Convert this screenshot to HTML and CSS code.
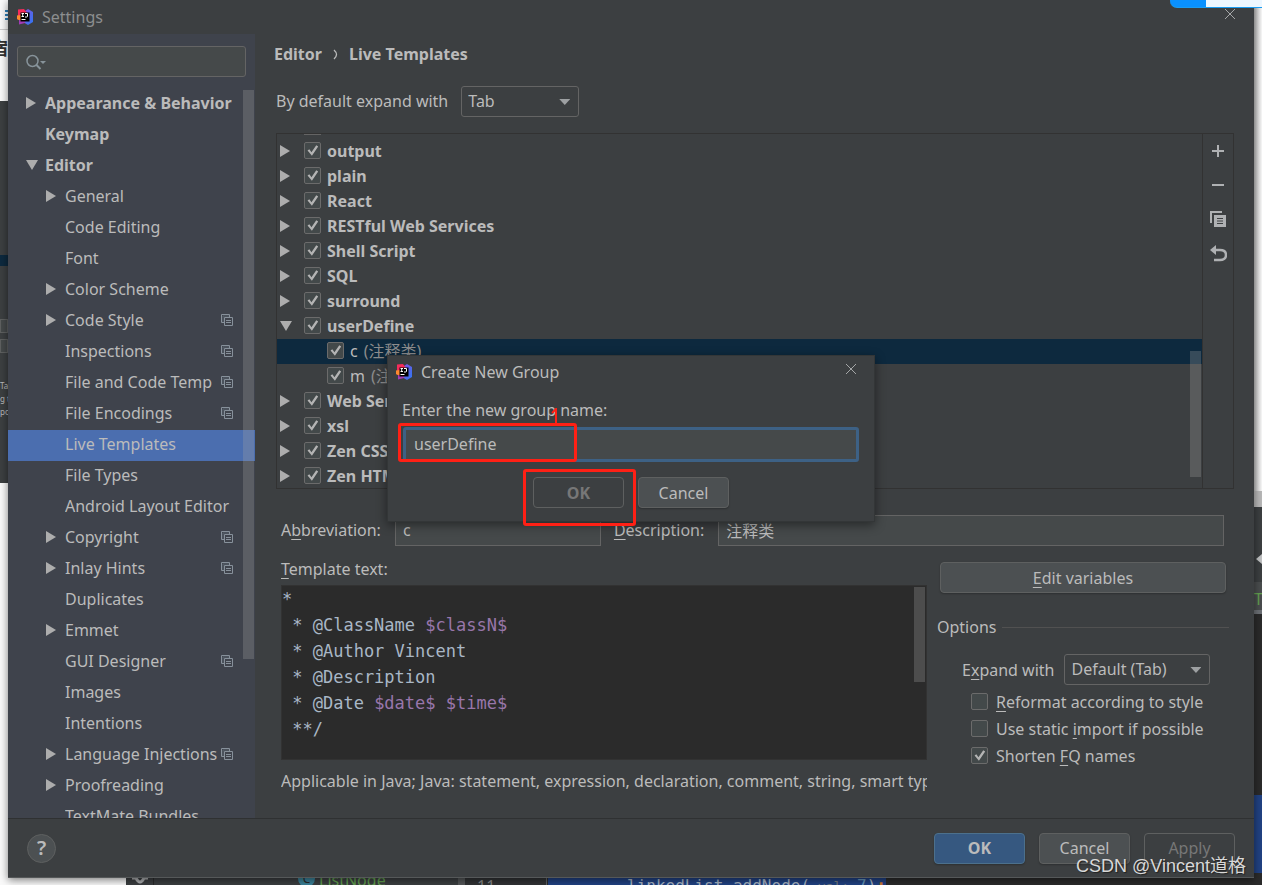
FILE: index.html
```
<!DOCTYPE html>
<html lang="en">
<head>
<meta charset="utf-8">
<title>Settings</title>
<link rel="stylesheet" href="styles.css">
</head>
<body>
<svg class="defs" aria-hidden="true">
  <defs>
    <linearGradient id="idea-blue" x1="0" y1="0" x2="1" y2="1"><stop offset="0" stop-color="#8a4fd8"/><stop offset="1" stop-color="#2b78f5"/></linearGradient>
    <linearGradient id="idea-pink" x1="0" y1="1" x2="1" y2="0"><stop offset="0" stop-color="#fb8a2e"/><stop offset=".4" stop-color="#f72c5b"/><stop offset="1" stop-color="#e9308f"/></linearGradient>
  </defs>
  <symbol id="idea" viewBox="0 0 16 16">
    <path d="M8 2 11 0 16 3 16 13 11 16 6 13z" fill="url(#idea-blue)"/>
    <path d="M1 .5 7 0 10 4 4 12 0 10 1 6z" fill="#f72c5b"/>
    <path d="M0 6.500 4 6 4 12 0 10z" fill="#fb8a2e"/>
    <path d="M2 11 8 12 8 14 2 15.500z" fill="#a13bb5"/>
    <path d="M3.500 3.500h9v9h-9z" fill="#000"/>
    <path d="M4.500 4.500h2.500M5.700 4.500v3M4.500 7.500h2.500M8 4.500h2.500V7q0 1-1 1H8" fill="none" stroke="#fff" stroke-width="1"/>
    <path d="M4.500 10.500h4" stroke="#fff" stroke-width="1"/>
  </symbol>
  <symbol id="right" viewBox="0 0 10 12"><path d="M0 0 10 6 0 12z" fill="#adadad"/></symbol>
  <symbol id="down" viewBox="0 0 12 10"><path d="M0 0h12L6 10z" fill="#adadad"/></symbol>
  <symbol id="scope" viewBox="0 0 12 12">
    <path d="M3 8.500H.5V.5h8V3" fill="none" stroke="#87919b"/>
    <path d="M3.500 3.500h8v8h-8z" fill="none" stroke="#87919b"/>
    <path d="M2 2h6M2 2v6" fill="none" stroke="#59626c"/>
    <path d="M5 6.500h5M5 8.500h5" stroke="#87919b"/>
  </symbol>
  <symbol id="close" viewBox="0 0 10 10"><path d="M0 0 10 10M10 0 0 10" stroke="#a5a7a8" fill="none"/></symbol>
</svg>

<div class="backdrop" aria-hidden="true">
  <div class="edge edge-left">
    <span class="edge-page"><i class="edge-mark"></i><b class="edge-glyph">宿</b></span>
    <span class="edge-dark"><i class="edge-select"></i><i class="edge-field"></i><i class="edge-field"></i><small>Tab<br>g to<br>po</small></span>
  </div>
  <div class="edge edge-right">
    <span class="edge-white"></span><span class="edge-gray"></span>
    <span class="edge-tool"><svg width="8" height="16" viewBox="0 0 8 16"><path d="M8 3v10L2 8z" fill="#c0c2c3"/></svg></span>
    <span class="edge-tab">T</span>
    <span class="edge-code"></span><span class="edge-blue"></span><span class="edge-end"></span>
  </div>
  <div class="ide-strip">
    <span class="strip-tool"><svg width="16" height="8" viewBox="0 0 16 8"><path d="M0 1h4q4 8 8 0h4" fill="none" stroke="#aeb0b2" stroke-width="3"/></svg></span>
    <span class="strip-project"><i class="class-icon">C</i>ListNode</span>
    <span class="strip-gutter">11</span>
    <code class="strip-code">linkedList.addNode(<small> val: </small><em>7</em>)<b>;</b></code>
  </div>
</div>

<main class="window">
  <header class="titlebar">
    <svg class="logo"><use href="#idea"/></svg>
    <h1>Settings</h1>
    <button class="close" aria-label="Close"><svg><use href="#close"/></svg></button>
  </header>

  <div class="body">
    <nav class="sidebar" aria-label="Settings categories">
      <label class="search">
        <svg width="22" height="18" viewBox="0 0 22 18"><circle cx="6.500" cy="8" r="5.500" fill="none" stroke="#87939a" stroke-width="1.500"/><path d="M10.500 12 14.500 16" stroke="#87939a" stroke-width="2"/><path d="M14 8h6l-3 3z" fill="#87939a"/></svg>
        <input type="text" aria-label="Search settings">
      </label>
      <ul class="nav">
        <li class="top"><svg class="tri"><use href="#right"/></svg><span>Appearance &amp; Behavior</span></li>
        <li class="top"><i class="tri"></i><span>Keymap</span></li>
        <li class="top"><svg class="tri tri-open"><use href="#down"/></svg><span>Editor</span></li>
        <li><svg class="tri"><use href="#right"/></svg><span>General</span></li>
        <li><i class="tri"></i><span>Code Editing</span></li>
        <li><i class="tri"></i><span>Font</span></li>
        <li><svg class="tri"><use href="#right"/></svg><span>Color Scheme</span></li>
        <li><svg class="tri"><use href="#right"/></svg><span>Code Style</span><svg class="scope"><use href="#scope"/></svg></li>
        <li><i class="tri"></i><span>Inspections</span><svg class="scope"><use href="#scope"/></svg></li>
        <li><i class="tri"></i><span>File and Code Temp</span><svg class="scope"><use href="#scope"/></svg></li>
        <li><i class="tri"></i><span>File Encodings</span><svg class="scope"><use href="#scope"/></svg></li>
        <li class="current"><i class="tri"></i><span>Live Templates</span></li>
        <li><i class="tri"></i><span>File Types</span></li>
        <li><i class="tri"></i><span>Android Layout Editor</span></li>
        <li><svg class="tri"><use href="#right"/></svg><span>Copyright</span><svg class="scope"><use href="#scope"/></svg></li>
        <li><svg class="tri"><use href="#right"/></svg><span>Inlay Hints</span><svg class="scope"><use href="#scope"/></svg></li>
        <li><i class="tri"></i><span>Duplicates</span></li>
        <li><svg class="tri"><use href="#right"/></svg><span>Emmet</span></li>
        <li><i class="tri"></i><span>GUI Designer</span><svg class="scope"><use href="#scope"/></svg></li>
        <li><i class="tri"></i><span>Images</span></li>
        <li><i class="tri"></i><span>Intentions</span></li>
        <li><svg class="tri"><use href="#right"/></svg><span>Language Injections</span><svg class="scope"><use href="#scope"/></svg></li>
        <li><svg class="tri"><use href="#right"/></svg><span>Proofreading</span></li>
        <li><i class="tri"></i><span>TextMate Bundles</span></li>
      </ul>
      <div class="thumb nav-thumb"></div>
    </nav>

    <section class="content">
      <h2 class="crumbs"><span>Editor</span><svg width="5" height="11" viewBox="0 0 5 11"><path d="M1 1q5 4.500 0 9" fill="none" stroke="#bbb" stroke-width="1.300"/></svg><span>Live Templates</span></h2>
      <div class="expand">
        <label for="default-key">By default expand with</label>
        <span class="select select-tab"><select id="default-key"><option>Tab</option></select></span>
      </div>

      <div class="templates">
        <div class="groups">
          <div class="cut-row"><i></i></div>
          <div class="group"><svg class="tri"><use href="#right"/></svg><label><input type="checkbox" checked>output</label></div>
          <div class="group"><svg class="tri"><use href="#right"/></svg><label><input type="checkbox" checked>plain</label></div>
          <div class="group"><svg class="tri"><use href="#right"/></svg><label><input type="checkbox" checked>React</label></div>
          <div class="group"><svg class="tri"><use href="#right"/></svg><label><input type="checkbox" checked>RESTful Web Services</label></div>
          <div class="group"><svg class="tri"><use href="#right"/></svg><label><input type="checkbox" checked>Shell Script</label></div>
          <div class="group"><svg class="tri"><use href="#right"/></svg><label><input type="checkbox" checked>SQL</label></div>
          <div class="group"><svg class="tri"><use href="#right"/></svg><label><input type="checkbox" checked>surround</label></div>
          <div class="group"><svg class="tri tri-open"><use href="#down"/></svg><label><input type="checkbox" checked>userDefine</label></div>
          <div class="group item chosen"><label><input type="checkbox" checked>c <span>(注释类)</span></label></div>
          <div class="group item"><label><input type="checkbox" checked>m <span>(注释方法)</span></label></div>
          <div class="group"><svg class="tri"><use href="#right"/></svg><label><input type="checkbox" checked>Web Services</label></div>
          <div class="group"><svg class="tri"><use href="#right"/></svg><label><input type="checkbox" checked>xsl</label></div>
          <div class="group"><svg class="tri"><use href="#right"/></svg><label><input type="checkbox" checked>Zen CSS</label></div>
          <div class="group"><svg class="tri"><use href="#right"/></svg><label><input type="checkbox" checked>Zen HTML</label></div>
          <div class="thumb groups-thumb"></div>
        </div>
        <div class="tools">
          <button aria-label="Add"><svg viewBox="0 0 18 18"><path d="M3 9h12M9 3v12" stroke="#afb1b3" stroke-width="2"/></svg></button>
          <button aria-label="Remove"><svg viewBox="0 0 18 18"><path d="M3 9h12" stroke="#afb1b3" stroke-width="2"/></svg></button>
          <button aria-label="Duplicate"><svg viewBox="0 0 18 18"><path d="M2 13V2h11" fill="none" stroke="#afb1b3" stroke-width="2"/><path d="M5 5h12v12H5z" fill="#afb1b3"/><path d="M8 8.500h6M8 11h6M8 13.500h6" stroke="#3c3f41" stroke-width="1"/></svg></button>
          <button aria-label="Revert"><svg viewBox="0 0 18 18"><path d="M5 6h6q6 0 6 5t-6 5H5" fill="none" stroke="#afb1b3" stroke-width="2.500"/><path d="M7 1v10L1 6z" fill="#afb1b3"/></svg></button>
        </div>
      </div>

      <div class="fields">
        <label for="abbr">A<u>b</u>breviation:</label>
        <input id="abbr" class="abbr" type="text" value="c">
        <label for="desc"><u>D</u>escription:</label>
        <input id="desc" class="desc" type="text" value="注释类">
      </div>

      <div class="details">
        <div class="template">
          <h3><u>T</u>emplate text:</h3>
          <div class="editor">
<pre>*
 * @ClassName <b>$classN$</b>
 * @Author Vincent
 * @Description
 * @Date <b>$date$</b> <b>$time$</b>
 **/</pre>
            <div class="thumb editor-thumb"></div>
          </div>
          <p class="applies">Applicable in Java; Java: statement, expression, declaration, comment, string, smart type completion</p>
        </div>
        <div class="options">
          <button class="btn"><span><u>E</u>dit variables</span></button>
          <fieldset>
            <legend>Options</legend>
            <div class="option-key"><label for="key">E<u>x</u>pand with</label><span class="select select-key"><select id="key"><option>Default (Tab)</option></select></span></div>
            <label class="check"><input type="checkbox"><span><u>R</u>eformat according to style</span></label>
            <label class="check"><input type="checkbox"><span>Use static <u>i</u>mport if possible</span></label>
            <label class="check"><input type="checkbox" checked><span>Shorten <u>F</u>Q names</span></label>
          </fieldset>
        </div>
      </div>
    </section>
  </div>

  <footer class="footer">
    <button class="help" aria-label="Help">?</button>
    <button class="btn primary">OK</button>
    <button class="btn">Cancel</button>
    <button class="btn ghost" disabled>Apply</button>
  </footer>
</main>

<section class="dialog" role="dialog" aria-labelledby="dialog-title">
  <header class="dialog-bar">
    <svg class="logo"><use href="#idea"/></svg>
    <h2 id="dialog-title">Create New Group</h2>
    <button class="close" aria-label="Close dialog"><svg><use href="#close"/></svg></button>
  </header>
  <div class="dialog-body">
    <label for="group-name">Enter the new group name:</label>
    <input id="group-name" type="text" value="userDefine">
    <div class="dialog-actions">
      <button class="btn ghost strong" disabled>OK</button>
      <button class="btn">Cancel</button>
    </div>
  </div>
  <div class="mark mark-name"></div>
  <div class="mark mark-ok"></div>
  <svg class="mark-arrow" viewBox="0 0 8 16"><path d="M5 16V1L1 5" fill="none" stroke="#ff2015" stroke-width="2"/></svg>
</section>

<div class="floating-bar" aria-hidden="true"></div>
<div class="watermark">CSDN @Vincent道格</div>
</body>
</html>
```
FILE: styles.css
```
* { box-sizing: border-box; }

body {
  margin: 0;
  height: 100vh;
  overflow: hidden;
  position: relative;
  background: #fafafa;
  color: #bbbbbb;
  font: 16px/24px "Noto Sans", "Noto Sans CJK SC", sans-serif;
}

h1, h2, h3, p, ul, pre, fieldset { margin: 0; padding: 0; border: 0; font-size: 16px; font-weight: 400; }
ul { list-style: none; }
button, input, select { font: inherit; color: inherit; }
button { padding: 0; border: 0; background: none; }
svg { display: block; flex: none; }
u { text-underline-offset: 3px; text-decoration-thickness: 1px; }
.defs { position: absolute; width: 0; height: 0; }

/* Desktop behind the windows */
.backdrop { position: absolute; inset: 0; overflow: hidden; }
.edge { position: absolute; top: 0; bottom: 0; width: 8px; display: flex; flex-direction: column; overflow: hidden; }
.edge > span { display: block; flex: none; overflow: hidden; }
.edge-left { left: 0; }
.edge-page { height: 101px; padding-top: 10px; }
.edge-mark { display: block; width: 3px; height: 11px; margin-left: 5px; background: repeating-linear-gradient(#2d7fb8 0 2px, #fff 2px 4px); }
.edge-glyph { display: block; margin: 8px 0 0 -10px; border-top: 1px solid #ccc; padding-top: 7px; color: #333; font-size: 18px; line-height: 22px; }
.edge-dark { height: 382px; padding-top: 154px; background: #3c3f41; }
.edge-select { display: block; height: 11px; margin-bottom: 53px; background: #0d293e; }
.edge-field { display: block; height: 14px; margin-bottom: 6px; border: 1px solid #5e6060; background: #45494a; }
.edge-dark small { display: block; padding-top: 20px; font-size: 8px; line-height: 13px; white-space: nowrap; }
.edge-right { right: 0; }
.edge-white { height: 491px; background: linear-gradient(90deg, #bbb, #fafafa); }
.edge-gray { height: 16px; background: #b8b8b8; }
.edge-tool { height: 75px; padding-top: 44px; background: #3c3f41; }
.edge-tab { height: 32px; border-bottom: 4px solid #6c7075; background: #4a4d4e; color: #62a050; line-height: 34px; }
.edge-code { height: 181px; background: #2b2b2b; }
.edge-blue { height: 78px; background: #214283; }
.edge-end { flex: 1 !important; background: #2b2b2b; }
.ide-strip { position: absolute; left: 126px; right: 0; bottom: 0; height: 8px; display: flex; overflow: hidden; background: #2b2b2b; }
.strip-tool { width: 28px; padding-left: 6px; background: #3c3f41; border-right: 1px solid #2b2b2b; }
.strip-project { display: flex; gap: 4px; width: 311px; padding-left: 144px; border-right: 7px solid #555759; background: #3c3f41; color: #62a050; line-height: 6px; }
.class-icon { width: 17px; height: 17px; margin-top: -7px; border-radius: 50%; background: #3b8299; color: #2b2b2b; font-size: 12px; line-height: 18px; text-align: center; font-style: normal; }
.strip-gutter { width: 82px; padding-left: 12px; border-right: 1px solid #606366; background: #313335; color: #888; line-height: 18px; }
.strip-code { margin-left: 1px; padding-left: 79px; background: #214283; color: #a9b7c6; font: 16px/18px "DejaVu Sans Mono", monospace; white-space: pre; }
.strip-code small { color: #747a80; font-size: 13px; }
.strip-code em { color: #6897bb; font-style: normal; }
.strip-code b { color: #cc7832; }

/* Settings window */
.window {
  position: absolute;
  inset: 0 8px 7px;
  display: flex;
  flex-direction: column;
  background: #3c3f41;
  border-bottom: 1px solid #555859;
  box-shadow: 0 2px 8px rgba(0, 0, 0, .5);
}
.titlebar, .dialog-bar { display: flex; align-items: center; height: 34px; padding: 0 19px 0 9px; }
.titlebar { flex: none; color: #8c8e8f; }
.logo { width: 16px; height: 16px; margin-right: 9px; }
.close { width: 10px; height: 10px; margin-left: auto; margin-bottom: 6px; }
.close svg { width: 10px; height: 10px; }
.body { flex: 1; min-height: 0; display: flex; }

/* Sidebar */
.sidebar { position: relative; flex: none; width: 247px; padding-top: 12px; overflow: hidden; background: #3f434c; }
.search { display: flex; align-items: center; height: 31px; margin: 0 9px 12px; padding-left: 8px; border: 1px solid #646464; border-radius: 3px; background: #45494a; }
.search input { flex: 1; min-width: 0; border: 0; outline: 0; background: none; }
.nav li { display: flex; align-items: center; height: 31px; padding: 0 22px 4px 38px; }
.nav .top { padding-left: 18px; font-weight: 700; }
.nav span { flex: 1; overflow: hidden; white-space: nowrap; }
.nav .current { background: #4b6eaf; }
.tri { flex: none; width: 10px; height: 12px; margin-right: 9px; }
.tri-open { width: 12px; height: 10px; margin-right: 7px; }
.scope { width: 12px; height: 12px; margin-left: 4px; }
.thumb { position: absolute; background: rgba(166, 166, 166, .28); }
.nav-thumb { top: 56px; right: 1px; width: 11px; height: 569px; }

/* Content */
.content { flex: 1; min-width: 0; padding: 8px 20px 0 21px; }
.crumbs { display: flex; align-items: center; gap: 11px; height: 24px; margin-left: -2px; font-weight: 700; }
.expand { display: flex; align-items: center; gap: 13px; margin: 20px 0 16px; }
.expand label { padding-bottom: 2px; }
.select { position: relative; display: block; }
.select::after { content: ""; position: absolute; right: 9px; top: 13px; width: 11px; height: 6px; background: #9da0a2; clip-path: polygon(0 0, 100% 0, 50% 100%); pointer-events: none; }
.select select { display: block; appearance: none; width: 100%; height: 31px; padding: 0 6px 2px; border: 1px solid #646464; border-radius: 3px; background: #3c3f41; }
.select-tab { width: 118px; }
.select-key { width: 146px; }

.templates { display: flex; border: 1px solid #323232; }
.groups { position: relative; flex: 1; min-width: 0; height: 354px; overflow: hidden; }
.cut-row { height: 5px; }
.cut-row i { display: block; width: 17px; height: 1px; margin-left: 27px; background: #646464; }
.group { display: flex; align-items: center; height: 25px; padding: 0 0 2px 3px; font-weight: 700; }
.group .tri { margin-right: 14px; }
.group .tri-open { margin-right: 12px; }
.group label { display: flex; align-items: center; gap: 6px; white-space: nowrap; }
.group.item { padding-left: 50px; font-weight: 400; }
.item span { color: #8c8c8c; }
.chosen { background: #0d293e; }
.groups-thumb { right: 1px; top: 217px; width: 11px; height: 126px; }
.tools { flex: none; display: flex; flex-direction: column; align-items: center; gap: 16px; width: 31px; padding-top: 8px; border-left: 1px solid #323232; }
.tools svg { width: 18px; height: 18px; }

input[type="checkbox"] { appearance: none; flex: none; width: 17px; height: 17px; margin: 0; border: 1px solid #6b6b6b; border-radius: 2px; background: #43494a; }
input[type="checkbox"]:checked::before { content: ""; display: block; width: 15px; height: 15px; background: #b4b4b4; clip-path: polygon(17% 50%, 29% 41%, 43% 61%, 75% 15%, 88% 23%, 46% 85%); }

.fields { display: flex; align-items: center; margin: 26px 10px 11px 5px; }
.fields label { padding-bottom: 2px; }
.fields input { height: 31px; padding: 0 7px 2px; border: 1px solid #646464; outline: 0; background: #45494a; }
.fields .abbr { width: 206px; margin: 0 13px 0 14px; }
.fields .desc { flex: 1; min-width: 0; margin-left: 14px; }

.details { display: flex; gap: 13px; padding: 0 1px 0 5px; }
.template { flex: 1; min-width: 0; }
.editor { position: relative; height: 175px; margin: 4px 0 9px; background: #2b2b2b; border: 1px solid #323232; }
.editor pre { color: #a9b7c6; font: 17px/26px "DejaVu Sans Mono", monospace; }
.editor b { color: #9876aa; font-weight: 400; }
.editor-thumb { top: 1px; right: 1px; width: 11px; height: 95px; }
.applies { overflow: hidden; white-space: nowrap; }

.btn { width: 91px; height: 31px; border: 1px solid #5e6060; border-radius: 4px; background: #4c5052; box-shadow: 0 1px 2px rgba(0, 0, 0, .25); }
.primary { border-color: #4c708c; background: #365880; font-weight: 700; }
.ghost { background: none; box-shadow: none; color: #777777; }
.strong { font-weight: 700; }

.options { flex: none; width: 293px; padding-top: 5px; }
.options > .btn { display: block; width: 286px; margin-bottom: 22px; }
.options legend { display: flex; align-items: center; gap: 6px; width: 100%; padding: 0; margin: 0 0 15px -3px; }
.options legend::after { content: ""; flex: 1; height: 1px; margin-right: 1px; background: #515151; }
.option-key { display: flex; align-items: center; gap: 10px; margin-bottom: 3px; padding-left: 22px; }
.check { display: flex; align-items: center; gap: 8px; height: 27px; padding-left: 31px; white-space: nowrap; }

.footer { flex: none; display: flex; align-items: center; gap: 14px; height: 59px; padding: 0 19px; border-top: 1px solid #2f3132; }
.help { width: 29px; height: 29px; margin-right: auto; border: 1px solid #5e6060; border-radius: 50%; background: #4c5052; font-size: 20px; font-weight: 600; }

/* Dialog */
.dialog { position: absolute; left: 387px; top: 355px; width: 488px; border: 1px solid #333637; background: #3c3f41; box-shadow: 0 3px 10px rgba(0, 0, 0, .45); }
.dialog-bar { height: 32px; padding: 0 18px 0 8px; }
.dialog-body { padding: 10px 15px 13px; }
.dialog-body > label { display: block; padding-bottom: 5px; margin-left: -1px; }
.dialog-body > input { display: block; width: 100%; height: 35px; padding: 0 8px 1px; border: 3px solid #3d6185; border-radius: 3px; outline: 0; background: #45494a; }
.dialog-actions { display: flex; justify-content: center; gap: 14px; padding-top: 15px; }
.mark { position: absolute; border: 3px solid #ff2015; border-radius: 3px; pointer-events: none; }
.mark-name { left: 10px; top: 67px; width: 179px; height: 39px; }
.mark-ok { left: 135px; top: 113px; width: 113px; height: 57px; }
.mark-arrow { position: absolute; left: 163px; top: 52px; width: 8px; height: 16px; }

.floating-bar { position: absolute; top: 0; right: 0; width: 92px; height: 8px; border-bottom: 1px solid #1b9cf0; border-bottom-left-radius: 7px; background: linear-gradient(90deg, #0a91ff 36px, #eef7ff 36px); }
.watermark { position: absolute; right: 16px; bottom: 7px; color: #d8d8d8; font: 18px/24px "Liberation Sans", "Noto Sans CJK SC", sans-serif; text-shadow: 1px 1px 1px #222; white-space: nowrap; }
```
